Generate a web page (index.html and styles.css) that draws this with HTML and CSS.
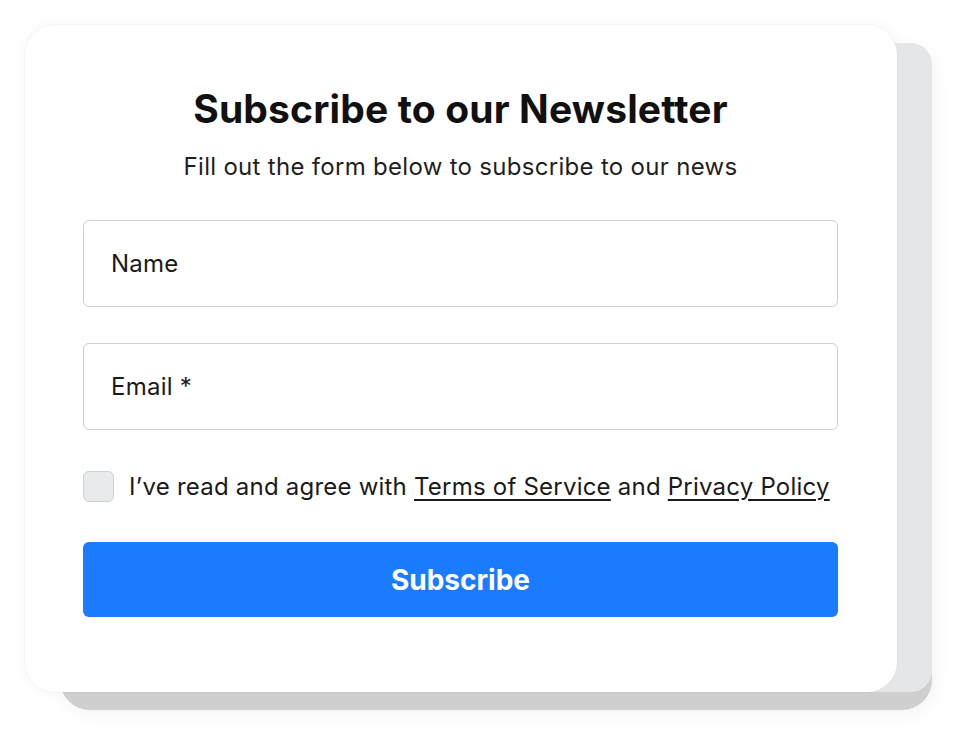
FILE: index.html
```html
<!DOCTYPE html>
<html lang="en">
<head>
<meta charset="utf-8">
<title>Subscribe to our Newsletter</title>
<link rel="stylesheet" href="styles.css">
</head>
<body>
<div class="stage">
  <form class="card">
    <h1 class="title">Subscribe to our Newsletter</h1>
    <p class="subtitle">Fill out the form below to subscribe to our news</p>
    <div class="field"><input class="input" type="text" placeholder="Name"></div>
    <div class="field"><input class="input" type="email" placeholder="Email *"></div>
    <label class="agree">
      <span class="checkbox"></span>
      <span class="agree-text">I’ve read and agree with <a href="#" class="link">Terms of Service</a> and <a href="#" class="link">Privacy Policy</a></span>
    </label>
    <button type="button" class="button">Subscribe</button>
  </form>
</div>
</body>
</html>
```
FILE: styles.css
```css
html, body {
  margin: 0;
  padding: 0;
  background: #ffffff;
}
body {
  font-family: Inter, "Noto Sans", "Liberation Sans", sans-serif;
  color: #1a1a1a;
}
.stage {
  box-sizing: border-box;
  min-height: 737px;
  padding: 25px 0 0 25px;
}
.card {
  box-sizing: border-box;
  width: 872px;
  height: 667px;
  background: #ffffff;
  border-radius: 30px;
  padding: 62px 59px 0 58px;
  display: flex;
  flex-direction: column;
  box-shadow:
    0 0 0 1px rgba(0, 0, 0, 0.025),
    44px 9px 0 -9px #e5e6e7,
    35px 18px 0 0 #cfcfcf,
    38px 22px 18px 0 rgba(0, 0, 0, 0.05),
    0 0 16px rgba(0, 0, 0, 0.04);
}
.title {
  margin: 0;
  text-align: center;
  font-size: 39px;
  font-weight: 700;
  line-height: 44px;
  letter-spacing: 0.15px;
  color: #111111;
}
.subtitle {
  margin: 21px 0 0;
  text-align: center;
  font-size: 24px;
  line-height: 30px;
  letter-spacing: 0.3px;
  color: #1f1f1f;
}
.field {
  margin-top: 38px;
}
.field + .field {
  margin-top: 36px;
}
.input {
  box-sizing: border-box;
  display: block;
  width: 100%;
  height: 87px;
  border: 1px solid #cfcfcf;
  border-radius: 6px;
  padding: 0 27px;
  font-family: inherit;
  font-size: 24px;
  letter-spacing: 0.25px;
  color: #1a1a1a;
  background: #ffffff;
  outline: none;
}
.input::placeholder {
  color: #1a1a1a;
  opacity: 1;
}
.agree {
  margin-top: 41px;
  display: flex;
  align-items: center;
  gap: 15px;
  font-size: 24px;
  line-height: 30px;
  letter-spacing: 0.22px;
  color: #1a1a1a;
}
.checkbox {
  box-sizing: border-box;
  width: 31px;
  height: 31px;
  flex: none;
  border: 1px solid #cfd0d2;
  border-radius: 6px;
  background: #e9eaec;
}
.link {
  color: #1a1a1a;
  text-decoration: underline;
  text-underline-offset: 4px;
  text-decoration-thickness: 1.5px;
}
.button {
  margin-top: 40px;
  height: 75px;
  width: 100%;
  border: none;
  border-radius: 6px;
  background: #1a7bff;
  color: #ffffff;
  font-family: inherit;
  font-size: 28px;
  font-weight: 700;
  cursor: pointer;
}
```
